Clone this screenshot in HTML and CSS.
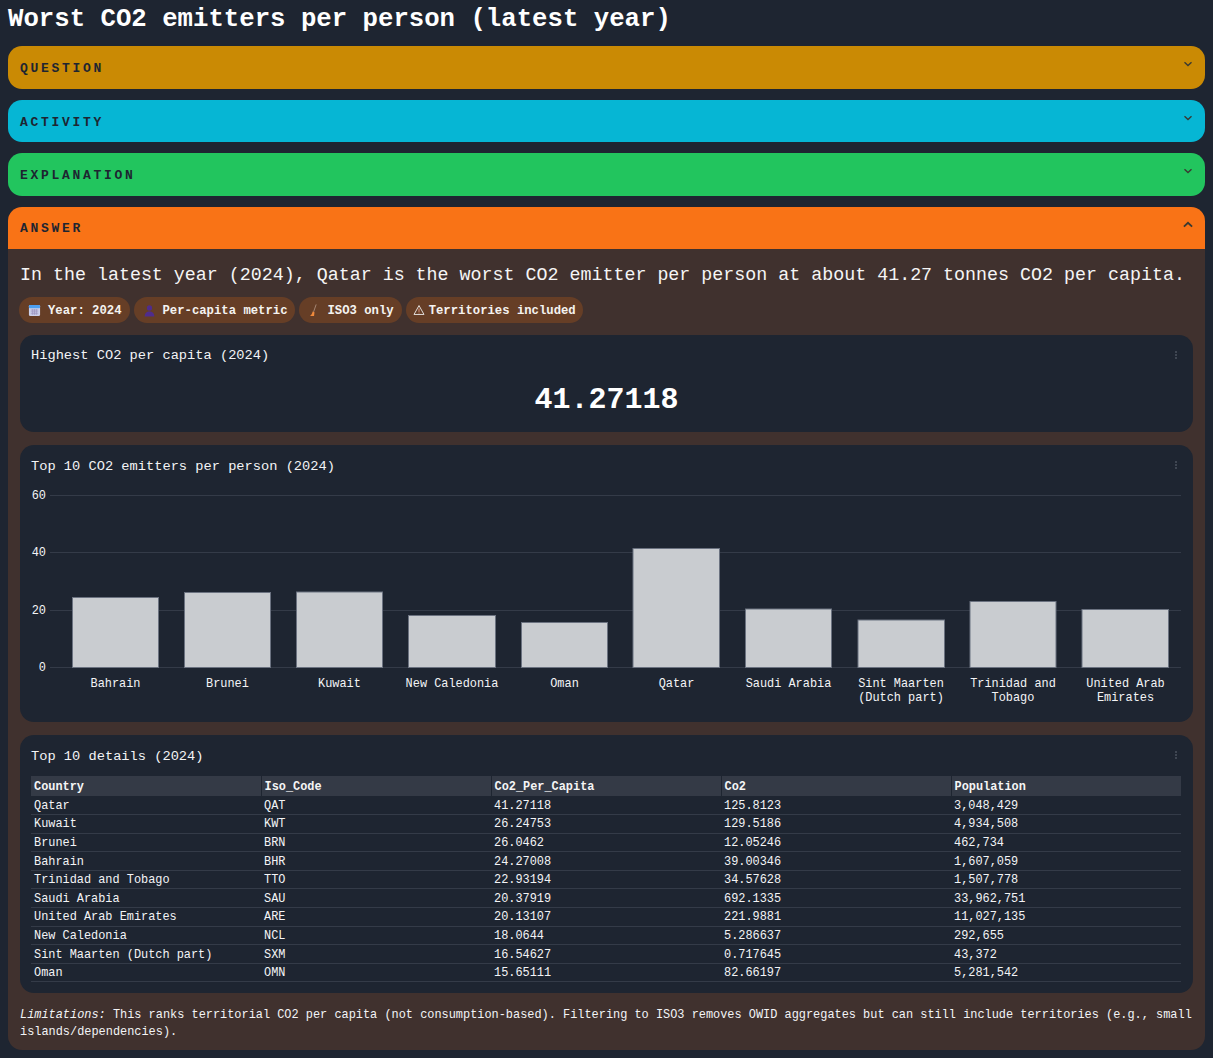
FILE: index.html
```html
<!DOCTYPE html>
<html lang="en">
<head>
<meta charset="utf-8">
<title>Worst CO2 emitters per person</title>
<link rel="stylesheet" href="styles.css">
</head>
<body>
<h1 class="page-title">Worst CO2 emitters per person (latest year)</h1>

<section class="acc acc-question">
  <header class="acc-head"><span class="acc-label">QUESTION</span><svg class="chev" viewBox="0 0 10 6"><path d="M1.5 1.2 5 4.5l3.5-3.3"/></svg></header>
</section>
<section class="acc acc-activity">
  <header class="acc-head"><span class="acc-label">ACTIVITY</span><svg class="chev" viewBox="0 0 10 6"><path d="M1.5 1.2 5 4.5l3.5-3.3"/></svg></header>
</section>
<section class="acc acc-explanation">
  <header class="acc-head"><span class="acc-label">EXPLANATION</span><svg class="chev" viewBox="0 0 10 6"><path d="M1.5 1.2 5 4.5l3.5-3.3"/></svg></header>
</section>

<section class="acc acc-answer">
  <header class="acc-head"><span class="acc-label acc-label-open">ANSWER</span><svg class="chev chev-open" viewBox="0 0 10 6"><path d="M1.5 4.8 5 1.5l3.5 3.3"/></svg></header>
  <div class="acc-body">
    <p class="summary">In the latest year (2024), Qatar is the worst CO2 emitter per person at about 41.27 tonnes CO2 per capita.</p>
    <div class="pills">
      <span class="pill"><svg class="pill-icon" viewBox="0 0 14 14"><rect x="1" y="1" width="12" height="12" rx="1.5" fill="#ccd0ea"/><rect x="1" y="1" width="12" height="3.5" rx="1" fill="#4d9ff0"/><path d="M3 6.500h8M3 8.500h8M3 10.500h8M5 5.500v6M7 5.500v6M9 5.500v6" stroke="#9b94c0" stroke-width=".8" fill="none"/></svg>Year: 2024</span>
      <span class="pill"><svg class="pill-icon" viewBox="0 0 14 14"><circle cx="7" cy="4.200" r="2.800" fill="#4f2c8c"/><path d="M1.800 13.500c0-3.800 2.200-5.500 5.200-5.500s5.200 1.700 5.200 5.500z" fill="#4f2c8c"/></svg>Per-capita metric</span>
      <span class="pill pill-iso"><svg class="pill-icon" viewBox="0 0 14 14"><path d="M8.800.500 6 8.500" stroke="#a98a78" stroke-width="1"/><path d="M5 8 7 8.800 6.500 13 2.200 13C3.800 11.500 4.600 10 5 8z" fill="#f08a3c"/></svg>ISO3 only</span>
      <span class="pill pill-warn"><svg class="pill-icon pill-icon-warn" viewBox="0 0 14 14"><path d="M7 1.800 12.800 12.200H1.200z" fill="none" stroke="#e8e4e2" stroke-width="1.100"/><path d="M7 5.200v4M7 10v1" stroke="#e8a08a" stroke-width="1.100"/></svg>Territories included</span>
    </div>

    <article class="card card-kpi">
      <div class="card-head"><h2 class="card-title">Highest CO2 per capita (2024)</h2><span class="kebab"></span></div>
      <div class="kpi">41.27118</div>
    </article>

    <article class="card card-chart">
      <div class="card-head"><h2 class="card-title">Top 10 CO2 emitters per person (2024)</h2><span class="kebab"></span></div>
      <svg class="chart" viewBox="0 0 1151 222" width="1151" height="222">
        <g class="grid">
          <line x1="19" x2="1150" y1="9.500" y2="9.500"/>
          <line x1="19" x2="1150" y1="66.500" y2="66.500"/>
          <line x1="19" x2="1150" y1="124.500" y2="124.500"/>
          <line x1="19" x2="1150" y1="181.500" y2="181.500"/>
        </g>
        <g class="ticks">
          <text x="15" y="12.500">60</text>
          <text x="15" y="70">40</text>
          <text x="15" y="127.500">20</text>
          <text x="15" y="185">0</text>
        </g>
        <g class="bars">
          <rect x="41.500" y="111.500" width="86" height="70"/>
          <rect x="153.500" y="106.500" width="86" height="75"/>
          <rect x="265.500" y="106" width="86" height="75.500"/>
          <rect x="377.500" y="129.500" width="87" height="52"/>
          <rect x="490.500" y="136.500" width="86" height="45"/>
          <rect x="602" y="62.500" width="86.500" height="119"/>
          <rect x="714.500" y="123" width="86" height="58.500"/>
          <rect x="827" y="134" width="86.500" height="47.500"/>
          <rect x="939" y="115.500" width="86" height="66"/>
          <rect x="1051" y="123.500" width="86.500" height="58"/>
        </g>
        <g class="labels">
          <text x="84.500" y="201">Bahrain</text>
          <text x="196.500" y="201">Brunei</text>
          <text x="308.500" y="201">Kuwait</text>
          <text x="421" y="201">New Caledonia</text>
          <text x="533.500" y="201">Oman</text>
          <text x="645.500" y="201">Qatar</text>
          <text x="757.500" y="201">Saudi Arabia</text>
          <text x="870" y="201">Sint Maarten</text>
          <text x="870" y="215">(Dutch part)</text>
          <text x="982" y="201">Trinidad and</text>
          <text x="982" y="215">Tobago</text>
          <text x="1094.500" y="201">United Arab</text>
          <text x="1094.500" y="215">Emirates</text>
        </g>
      </svg>
    </article>

    <article class="card card-table">
      <div class="card-head"><h2 class="card-title">Top 10 details (2024)</h2><span class="kebab"></span></div>
      <table class="details">
        <thead>
          <tr><th>Country</th><th>Iso_Code</th><th>Co2_Per_Capita</th><th>Co2</th><th>Population</th></tr>
        </thead>
        <tbody>
          <tr><td>Qatar</td><td>QAT</td><td>41.27118</td><td>125.8123</td><td>3,048,429</td></tr>
          <tr><td>Kuwait</td><td>KWT</td><td>26.24753</td><td>129.5186</td><td>4,934,508</td></tr>
          <tr><td>Brunei</td><td>BRN</td><td>26.0462</td><td>12.05246</td><td>462,734</td></tr>
          <tr><td>Bahrain</td><td>BHR</td><td>24.27008</td><td>39.00346</td><td>1,607,059</td></tr>
          <tr><td>Trinidad and Tobago</td><td>TTO</td><td>22.93194</td><td>34.57628</td><td>1,507,778</td></tr>
          <tr><td>Saudi Arabia</td><td>SAU</td><td>20.37919</td><td>692.1335</td><td>33,962,751</td></tr>
          <tr><td>United Arab Emirates</td><td>ARE</td><td>20.13107</td><td>221.9881</td><td>11,027,135</td></tr>
          <tr><td>New Caledonia</td><td>NCL</td><td>18.0644</td><td>5.286637</td><td>292,655</td></tr>
          <tr><td>Sint Maarten (Dutch part)</td><td>SXM</td><td>16.54627</td><td>0.717645</td><td>43,372</td></tr>
          <tr><td>Oman</td><td>OMN</td><td>15.65111</td><td>82.66197</td><td>5,281,542</td></tr>
        </tbody>
      </table>
    </article>

    <p class="note"><em class="note-lead">Limitations:</em> This ranks territorial CO2 per capita (not consumption-based). Filtering to ISO3 removes OWID aggregates but can still include territories (e.g., small islands/dependencies).</p>
  </div>
</section>
</body>
</html>
```
FILE: styles.css
```css
* { box-sizing: border-box; }

html, body { margin: 0; }

body {
  padding: 3px 8px 0;
  background: #1e2531;
  color: #f3f4f6;
  font-family: "Liberation Mono", "DejaVu Sans Mono", monospace;
  height: 1058px;
  overflow: hidden;
}

.page-title {
  margin: 0 0 11px;
  height: 32px;
  line-height: 34px;
  font-size: 25.7px;
  font-weight: 700;
  color: #fff;
}

.acc {
  margin-bottom: 11px;
  border-radius: 14px;
  overflow: hidden;
}

.acc-question .acc-head { background: #ca8a04; }
.acc-activity .acc-head { background: #06b6d4; height: 42px; }
.acc-explanation .acc-head { background: #22c55e; }
.acc-answer .acc-head { background: #f97316; height: 42px; }

.acc-head {
  display: flex;
  align-items: center;
  justify-content: space-between;
  height: 43px;
  padding: 0 12px;
}

.acc-label {
  padding-top: 2px;
  font-size: 13px;
  font-weight: 700;
  letter-spacing: 2.7px;
  color: #1e2531;
}

.acc-label-open { padding-top: 0; }

.chev {
  width: 10px;
  height: 6px;
  margin-bottom: 7px;
  fill: none;
  stroke: #3a3a32;
  stroke-width: 1.400;
}

.chev-open { width: 12px; height: 7px; margin-right: -1px; stroke-width: 1.600; }

.acc-body {
  background: #40312e;
  padding: 12px 12px 10px;
  height: 801px;
}

.summary {
  margin: 2px 0 8px;
  height: 26px;
  line-height: 26px;
  font-size: 18.320px;
  color: #f5f5f5;
}

.pills {
  display: flex;
  gap: 4px;
  margin: 0 0 12px -1px;
}

.pill {
  display: inline-flex;
  align-items: center;
  gap: 7px;
  height: 26px;
  padding: 2px 7px 0 9px;
  border-radius: 13px;
  background: #663e26;
  font-size: 12.250px;
  font-weight: 700;
  color: #f5f3f0;
}

.pill:first-child { padding-right: 8px; }
.pill-iso { padding-right: 8px; }

.pill-warn { gap: 4px; padding-left: 7px; }

.pill-icon { width: 13px; height: 13px; flex: none; margin-top: -2px; }
.pill-icon-warn { width: 12px; height: 12px; }

.card {
  background: #1e2531;
  border-radius: 14px;
  padding: 10px 11px;
  margin-bottom: 13px;
}

.card-kpi { height: 97px; }
.card-chart { height: 277px; }
.card-table { height: 258px; margin-bottom: 14px; }

.card-head {
  display: flex;
  justify-content: space-between;
  align-items: center;
  height: 20px;
}

.card-title {
  margin: 0;
  font-size: 13.700px;
  font-weight: 400;
  color: #f3f4f6;
}

.card-chart .card-title,
.card-table .card-title { padding-top: 2px; }

.kebab {
  position: relative;
  width: 2px;
  height: 2px;
  margin-right: 5px;
  background: #3f4652;
  box-shadow: 0 -3px 0 #3f4652, 0 3px 0 #3f4652;
}

.kpi {
  margin-top: 13px;
  height: 44px;
  line-height: 44px;
  text-align: center;
  font-size: 30px;
  font-weight: 700;
  color: #fff;
}

.chart {
  display: block;
  margin-top: 11px;
  font-family: "Liberation Mono", "DejaVu Sans Mono", monospace;
  font-size: 11.900px;
}

.grid line { stroke: #343b48; stroke-width: 1; }
.ticks text { fill: #f3f4f6; text-anchor: end; }
.labels text { fill: #f3f4f6; text-anchor: middle; }
.bars rect { fill: #c9ccd0; stroke: #6b7280; stroke-width: 1; }

.details {
  width: 1150px;
  margin: 11px 0 0 0;
  border-collapse: collapse;
  table-layout: fixed;
  font-size: 11.900px;
}

.details th {
  height: 20px;
  padding: 1px 3px 0;
  background: #343a46;
  border-right: 1px solid #1e2531;
  text-align: left;
  font-weight: 700;
  color: #f5f5f5;
}

.details th:last-child { border-right: 0; }

.details td {
  height: 18.600px;
  padding: 1px 3px 0;
  border-bottom: 1px solid #343b48;
  color: #f3f4f6;
}

.note {
  margin: 0;
  font-size: 11.920px;
  line-height: 17px;
  color: #f3f4f6;
}

.note-lead { font-style: italic; }
```
